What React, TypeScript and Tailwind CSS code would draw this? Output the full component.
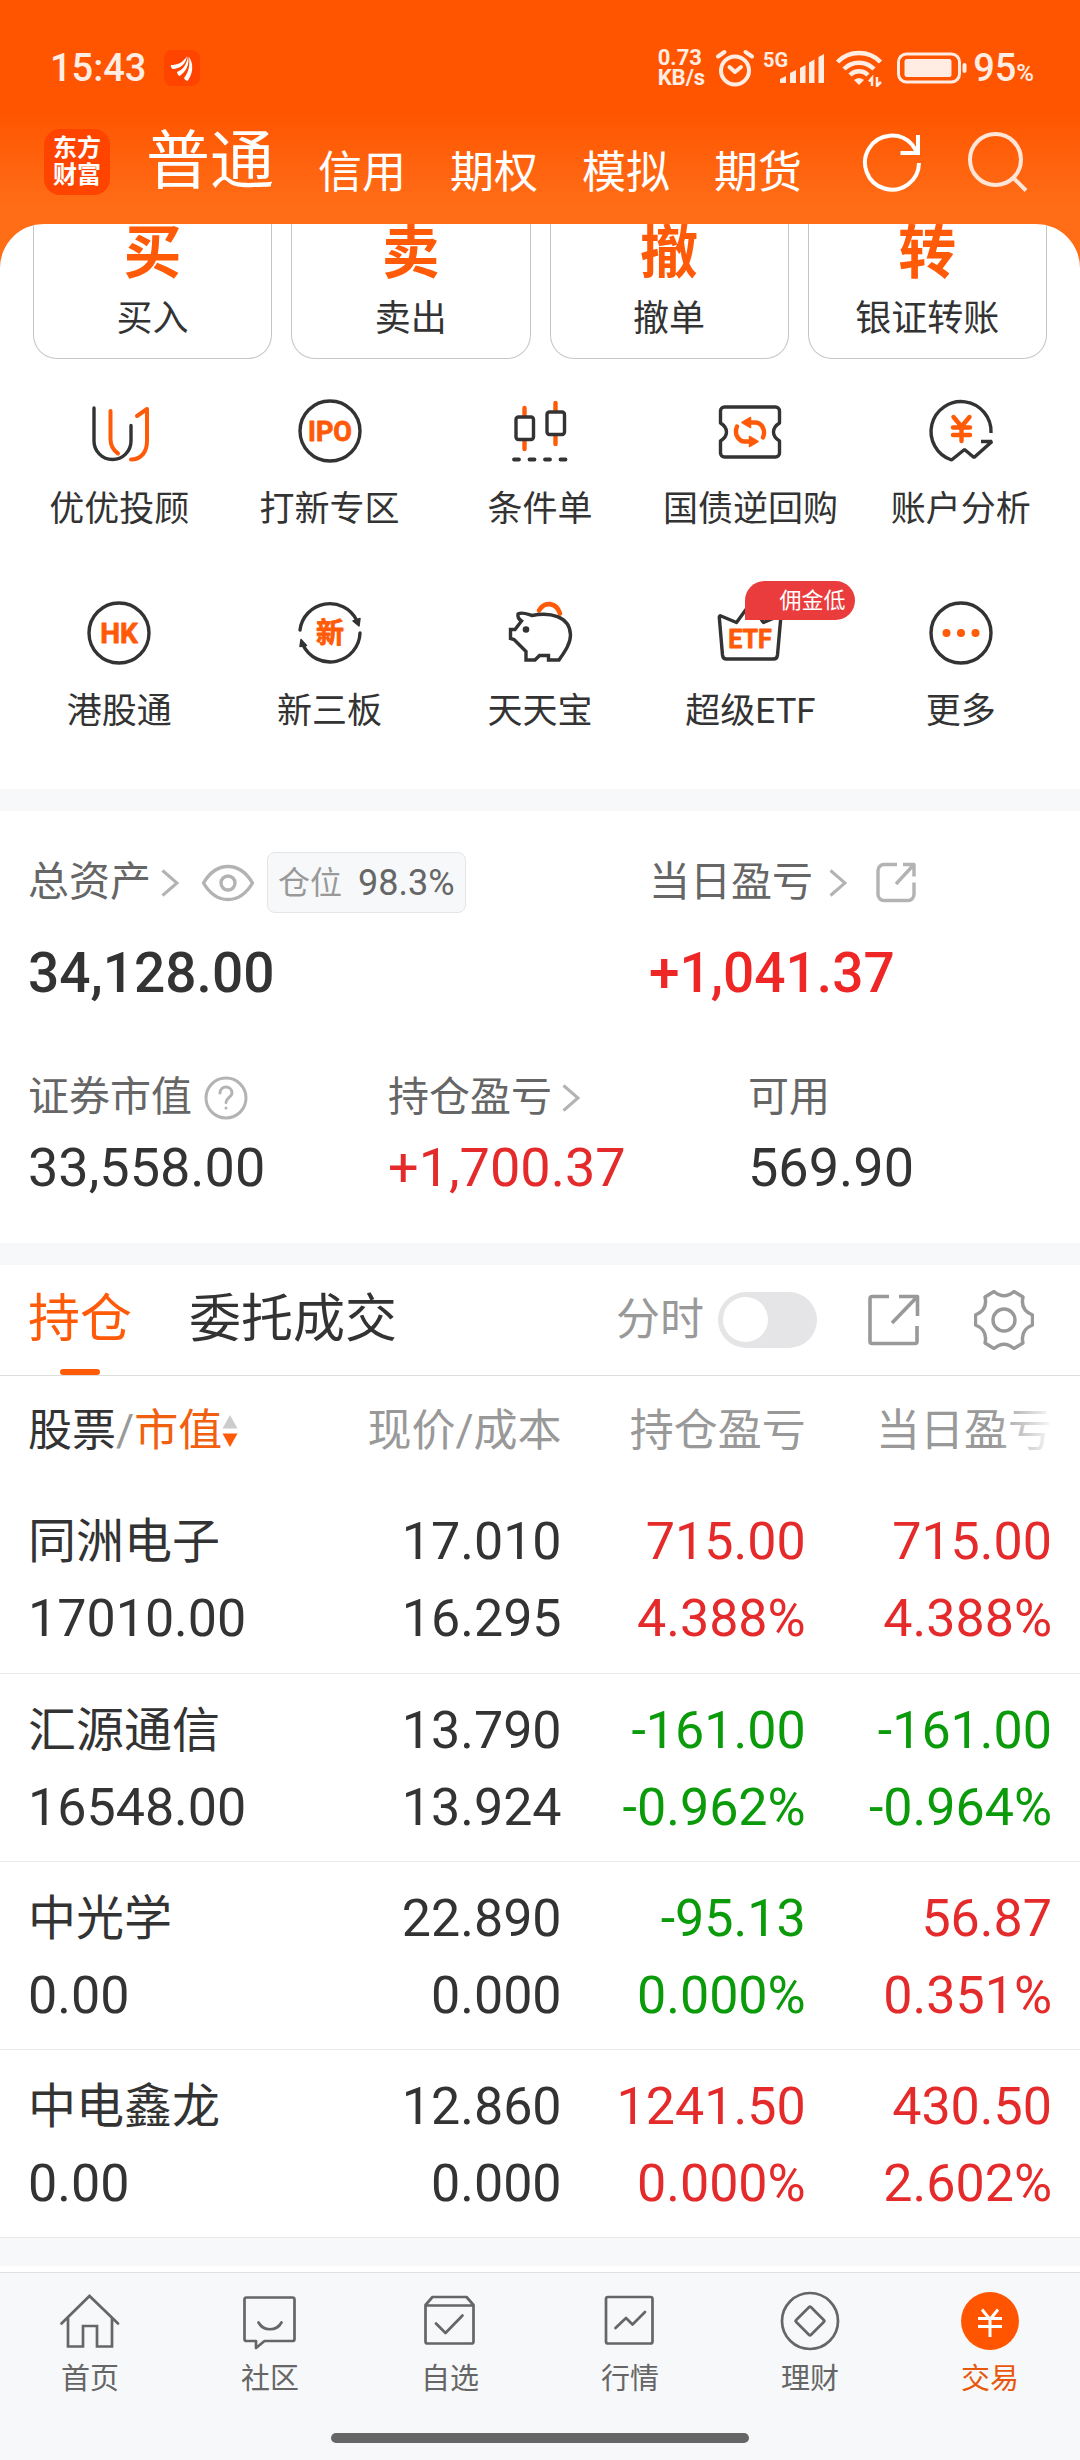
import React from "react";

const INK = "#333333";
const ORANGE = "#ff5a08";

type IconProps = { children: React.ReactNode };

function FeatureIcon({ children }: IconProps) {
  return (
    <svg
      viewBox="0 0 64 64"
      className="size-16 overflow-visible"
      fill="none"
      stroke={INK}
      strokeWidth={3.4}
      strokeLinecap="round"
      strokeLinejoin="round"
      aria-hidden="true"
    >
      {children}
    </svg>
  );
}

function IconLetters({ size, y, children }: { size: number; y: number; children: string }) {
  return (
    <text
      x={32}
      y={y}
      textAnchor="middle"
      fontSize={size}
      fontWeight={700}
      fill={ORANGE}
      stroke={ORANGE}
      strokeWidth={0.8}
      className="font-['Roboto','Noto_Sans_CJK_SC',sans-serif]"
    >
      {children}
    </text>
  );
}

const trades = [
  { glyph: "买", label: "买入" },
  { glyph: "卖", label: "卖出" },
  { glyph: "撤", label: "撤单" },
  { glyph: "转", label: "银证转账" },
];

const features: { label: string; badge?: string; icon: React.ReactNode }[] = [
  {
    label: "优优投顾",
    icon: (
      <FeatureIcon>
        <path d="M7 9v33a18.500 18.500 0 0 0 37 0V26.500" />
        <path d="M23.500 12v28c0 7 2.500 11 7.500 14.500" stroke={ORANGE} strokeWidth={4} />
        <path d="M50 17l10-7v32c0 11-6 18.500-16 18.500" stroke={ORANGE} strokeWidth={4} />
      </FeatureIcon>
    ),
  },
  {
    label: "打新专区",
    icon: (
      <FeatureIcon>
        <circle cx="32" cy="32" r="30" />
        <IconLetters size={27} y={42}>IPO</IconLetters>
      </FeatureIcon>
    ),
  },
  {
    label: "条件单",
    icon: (
      <FeatureIcon>
        <path d="M16.500 9v8M16.500 42v8M47.500 4v8M47.500 37v8" stroke={ORANGE} strokeWidth={4.4} />
        <rect x="8" y="18" width="17.500" height="22.500" rx="2.500" />
        <rect x="39" y="13" width="17.500" height="22.500" rx="2.500" />
        <path d="M6 60.500h5M21.500 60.500h5M37 60.500h5M52.500 60.500h5" strokeWidth={3.8} />
      </FeatureIcon>
    ),
  },
  {
    label: "国债逆回购",
    icon: (
      <FeatureIcon>
        <path d="M6.500 8h51a4 4 0 0 1 4 4v12c-8 5-8 13 0 18v12a4 4 0 0 1-4 4h-51a4 4 0 0 1-4-4V42c8-5 8-13 0-18V12a4 4 0 0 1 4-4z" />
        <path d="M31 23.500h6c7 0 11 8 8 15M33 42.500h-6c-7 0-11-8-8-15" stroke={ORANGE} strokeWidth={4.4} />
        <path d="M24 23.500l8.500-5v10zM40 42.500l-8.500-5v10z" fill={ORANGE} stroke={ORANGE} strokeWidth={1.5} />
      </FeatureIcon>
    ),
  },
  {
    label: "账户分析",
    icon: (
      <FeatureIcon>
        <path d="M62 34A30 30 0 1 0 22.500 61L35.500 50.500l9.500 8L63 42.500H52" strokeLinecap="butt" strokeLinejoin="bevel" />
        <path d="M24.500 18l8 9.500 8-9.500M24 28.500h17M24 36h17M32.500 28v14" stroke={ORANGE} strokeWidth={4.4} />
      </FeatureIcon>
    ),
  },
  {
    label: "港股通",
    icon: (
      <FeatureIcon>
        <circle cx="32" cy="32" r="30" />
        <IconLetters size={28} y={42}>HK</IconLetters>
      </FeatureIcon>
    ),
  },
  {
    label: "新三板",
    icon: (
      <FeatureIcon>
        <path d="M2 29A30 30 0 0 1 58.500 19M62 32A30 30 0 0 1 5 44" />
        <path d="M62 17.500L61 25l-6-5zM2 45.500L3 38.500l5.500 6z" fill={INK} strokeWidth={1.5} />
        <IconLetters size={28} y={42}>新</IconLetters>
      </FeatureIcon>
    ),
  },
  {
    label: "天天宝",
    icon: (
      <FeatureIcon>
        <path d="M31 9.500c5-9 17-9 21 3" stroke={ORANGE} strokeWidth={4.6} />
        <path
          d="M10 13c4-2.500 9 0 14 1.500 17-3.500 38 0 38.500 19.500 0 9-6 17-11.500 25H40.500v-4.500H31.500L27 59h-9v-8.500L10.500 43 6 38.500l-3.500-1V28.500H7l6.500-8.500c-3-2-4-4.500-3.500-7z"
          fill="#ffffff"
          strokeLinejoin="miter"
        />
        <circle cx="18" cy="28.500" r="3.300" fill={INK} stroke="none" />
      </FeatureIcon>
    ),
  },
  {
    label: "超级ETF",
    badge: "佣金低",
    icon: (
      <FeatureIcon>
        <path d="M3 15l15.500 6.500L32 3l13.500 18.500L61 15c1-.5 2 0 1.800 1.500L59.500 54c-.3 2.500-1.500 4-4 4h-47c-2.500 0-3.700-1.500-4-4L1.300 16.500C1.200 15 2 14.500 3 15z" />
        <IconLetters size={25} y={47}>ETF</IconLetters>
      </FeatureIcon>
    ),
  },
  {
    label: "更多",
    icon: (
      <FeatureIcon>
        <circle cx="32" cy="32" r="30" />
        <g fill={ORANGE} stroke="none">
          <circle cx="17.500" cy="32" r="4" />
          <circle cx="32" cy="32" r="4" />
          <circle cx="46.500" cy="32" r="4" />
        </g>
      </FeatureIcon>
    ),
  },
];

const RED = "text-[#e42a2a]";
const GREEN = "text-[#0a9a0a]";

const holdings = [
  { name: "同洲电子", value: "17010.00", price: "17.010", cost: "16.295", total: ["715.00", "4.388%", RED], day: ["715.00", "4.388%", RED] },
  { name: "汇源通信", value: "16548.00", price: "13.790", cost: "13.924", total: ["-161.00", "-0.962%", GREEN], day: ["-161.00", "-0.964%", GREEN] },
  { name: "中光学", value: "0.00", price: "22.890", cost: "0.000", total: ["-95.13", "0.000%", GREEN], day: ["56.87", "0.351%", RED] },
  { name: "中电鑫龙", value: "0.00", price: "12.860", cost: "0.000", total: ["1241.50", "0.000%", RED], day: ["430.50", "2.602%", RED] },
];

function TabIcon({ children }: IconProps) {
  return (
    <svg
      viewBox="0 0 60 60"
      className="size-15"
      fill="none"
      stroke="#666666"
      strokeWidth={2.7}
      strokeLinecap="round"
      strokeLinejoin="round"
      aria-hidden="true"
    >
      {children}
    </svg>
  );
}

const tabs = [
  {
    label: "首页",
    icon: (
      <TabIcon>
        <path d="M1.500 32.500L29.500 5 58 32.500M8 27v28.500h15V35h14v20.500h15V27" strokeLinejoin="miter" />
      </TabIcon>
    ),
  },
  {
    label: "社区",
    icon: (
      <TabIcon>
        <path d="M6.500 6.500h46a2 2 0 0 1 2 2v39.500a2 2 0 0 1-2 2h-28l-8.500 7v-7H6.500a2 2 0 0 1-2-2V8.500a2 2 0 0 1 2-2z" />
        <path d="M18.500 31.500c5 9 18 9 23 0" />
      </TabIcon>
    ),
  },
  {
    label: "自选",
    icon: (
      <TabIcon>
        <path d="M5.500 14L12.500 6h34l7 8v36.500a2 2 0 0 1-2 2H7.500a2 2 0 0 1-2-2zM5.500 14.500h48M16 32.500l9.500 9.500 17-17.500" />
      </TabIcon>
    ),
  },
  {
    label: "行情",
    icon: (
      <TabIcon>
        <rect x="6" y="6" width="46.500" height="46.500" rx="2" />
        <path d="M15.500 37L26 27l6.500 6.500L45 21" />
      </TabIcon>
    ),
  },
  {
    label: "理财",
    icon: (
      <TabIcon>
        <circle cx="30" cy="30" r="28" />
        <rect x="19.500" y="19.500" width="21" height="21" rx="1.500" transform="rotate(45 30 30)" />
      </TabIcon>
    ),
  },
  {
    label: "交易",
    active: true,
    icon: (
      <TabIcon>
        <circle cx="30" cy="30" r="29" fill="#ff5500" stroke="none" />
        <path d="M22 18.500L30 28.500 38 18.500M18 27.500h24M18 35.500h24M30 28v18" stroke="#ffffff" strokeWidth={3} strokeLinecap="butt" />
      </TabIcon>
    ),
  },
];

function Chevron() {
  return (
    <svg viewBox="0 0 18 28" className="h-7 w-[18px]" fill="none" stroke="#b3b3b3" strokeWidth={3} aria-hidden="true">
      <path d="M1.500 1.500L16 14 1.500 26.500" />
    </svg>
  );
}

function StatusBar() {
  return (
    <div className="flex h-10 items-center justify-between pr-[46px] pl-[50px] text-[#ffece2]">
      <div className="flex items-center gap-[18px]">
        <span className="text-[38px] leading-10 font-medium">15:43</span>
        <svg viewBox="0 0 36 36" className="size-9" aria-hidden="true">
          <rect width="36" height="36" rx="8" fill="#ff4400" />
          <path d="M7 15c6 0 12-2 16-9-1 8-7 13-14.500 13C7 18 6.500 16 7 15z" fill="#fff" />
          <path d="M13 22c6-2 10-8 11-16 2 8-2 16-8.500 20-1.500-1-2.500-2.500-2.500-4z" fill="#fff" />
          <path d="M20 28c5-6 6-13 5-21 5 7 4 17-1.500 24-1.500-.5-3-1.500-3.500-3z" fill="#fff" />
        </svg>
      </div>
      <div className="flex items-center">
        <span className="text-[22px] leading-5 font-bold">
          0.73
          <br />
          KB/s
        </span>
        <svg viewBox="0 0 40 38" className="ml-2.5 h-[38px] w-10" fill="none" stroke="currentColor" strokeWidth={4} strokeLinecap="round" strokeLinejoin="round" aria-hidden="true">
          <circle cx="20" cy="21.500" r="14" />
          <path d="M3 7.500L9.500 3M37 7.500L30.500 3M14.500 18l5.500 5 6-5" />
        </svg>
        <svg viewBox="0 0 62 38" className="ml-2 h-[38px] w-[62px]" fill="currentColor" aria-hidden="true">
          <text x="0" y="18" fontSize="20" fontWeight={700} className="font-['Roboto',sans-serif]">5G</text>
          <path d="M17 30l6-3v7h-6zM27 24l6-3v13h-6zM37 19l5.500-3v18H37zM46 13.500l5.500-3V34H46zM55.500 8l5.500-3v29h-5.500z" />
        </svg>
        <svg viewBox="0 0 48 38" className="ml-2.5 h-[38px] w-12" fill="none" stroke="currentColor" strokeWidth={4.5} aria-hidden="true">
          <path d="M2.500 13C14 1 34 1 45.500 13M9 20c8-8.500 22-8.500 30 0M15 26c5-5 13-5 18 0" />
          <path d="M19 31c3-2.500 7-2.500 10 0l-5 5z" fill="currentColor" stroke="none" />
          <path d="M37 37V29l-3 3.500M42 28v9l4-4" strokeWidth={2.5} />
        </svg>
        <svg viewBox="0 0 70 34" className="ml-3.5 h-[34px] w-[70px]" fill="currentColor" aria-hidden="true">
          <rect x="1.500" y="3" width="61" height="28" rx="8" fill="none" stroke="currentColor" strokeWidth={3} />
          <rect x="7.500" y="8" width="47" height="18" rx="2.500" />
          <rect x="65.500" y="12" width="4" height="10" rx="2" />
        </svg>
        <span className="ml-1.5 text-[38px] leading-10 font-medium">
          95<span className="text-2xl">%</span>
        </span>
      </div>
    </div>
  );
}

function Header() {
  return (
    <header className="bg-linear-to-b from-[#ff5500] from-50% to-[#ff6e17] to-95% pt-12 pb-[29px] text-white">
      <StatusBar />
      <div className="mt-[41px] flex h-[66px] items-center pr-[52px] pl-11">
        <a href="#home" className="flex size-[66px] items-center justify-center rounded-2xl bg-[#ff4400] text-center text-2xl leading-[27px] font-bold">
          东方
          <br />
          财富
        </a>
        <nav className="ml-9 flex items-end gap-11">
          <a href="#normal" className="text-[64px] leading-[66px]">普通</a>
          {["信用", "期权", "模拟", "期货"].map((item) => (
            <a key={item} href={`#${item}`} className="text-[44px] leading-[44px]">
              {item}
            </a>
          ))}
        </nav>
        <div className="ml-auto flex items-center gap-[46px]">
          <button type="button" aria-label="刷新">
            <svg viewBox="0 0 60 60" className="block size-15" fill="none" stroke="currentColor" strokeWidth={4} aria-hidden="true">
              <path d="M57 31A27 27 0 1 1 50 12.500L55 20" />
              <path d="M38.500 21H56V3" />
            </svg>
          </button>
          <button type="button" aria-label="搜索" className="text-[#ffe5d8]">
            <svg viewBox="0 0 60 60" className="block size-15" fill="none" stroke="currentColor" strokeWidth={4} aria-hidden="true">
              <circle cx="27.500" cy="27.500" r="25.500" />
              <path d="M45 45.500L58 58.500" />
            </svg>
          </button>
        </div>
      </div>
    </header>
  );
}

function Shortcuts() {
  return (
    <section className="overflow-hidden rounded-t-[44px] bg-white pb-[59px]">
      <div className="grid grid-cols-4 gap-[19px] px-[33px]">
        {trades.map((t) => (
          <button key={t.label} type="button" className="flex h-[135px] flex-col items-center rounded-b-3xl border border-t-0 border-[#c6c6c6]">
            <span className="text-[58px] leading-[58px] font-bold text-[#ff5a08]">{t.glyph}</span>
            <span className="mt-[19px] text-4xl leading-9 text-[#333333]">{t.label}</span>
          </button>
        ))}
      </div>
      <ul className="mt-10 grid grid-cols-5 gap-y-[73px] px-3.5">
        {features.map((f) => (
          <li key={f.label}>
            <a href={`#${f.label}`} className="relative flex flex-col items-center text-[#333333]">
              {f.icon}
              <span className="mt-[29px] text-[35px] leading-9 whitespace-nowrap">{f.label}</span>
              {f.badge && (
                <span className="absolute -top-5 left-1/2 flex h-[39px] w-[110px] -translate-x-[5px] items-center justify-end rounded-[20px] rounded-bl-none bg-[#ea3c3c] pr-2.5 text-[22px] text-white">
                  {f.badge}
                </span>
              )}
            </a>
          </li>
        ))}
      </ul>
    </section>
  );
}

function Assets() {
  return (
    <section className="bg-white pt-[41px] pb-12 text-[41px] text-[#666666]">
      <div className="grid grid-cols-[23fr_17fr]">
        <div className="pl-7">
          <div className="flex h-[61px] items-center">
            <a href="#assets" className="flex items-center gap-2.5">
              总资产
              <Chevron />
            </a>
            <button type="button" aria-label="隐藏金额" className="ml-[22px]">
              <svg viewBox="0 0 54 38" className="block h-[38px] w-[54px]" fill="none" stroke="#b3b3b3" strokeWidth={3.4} aria-hidden="true">
                <path d="M2.500 19C9 8 17 2.500 27 2.500S45 8 51.500 19C45 30 37 35.500 27 35.500S9 30 2.500 19z" strokeLinejoin="round" />
                <circle cx="27" cy="19" r="7" />
              </svg>
            </button>
            <span className="ml-3 flex h-[61px] items-center gap-4 rounded-lg border border-[#e4e5e8] bg-[#f7f8fa] px-2.5 text-[32px] text-[#999999]">
              仓位
              <span className="text-4xl text-[#666666]">98.3%</span>
            </span>
          </div>
          <p className="mt-[30px] text-[55px] leading-[60px] font-medium text-[#333333]">34,128.00</p>
        </div>
        <div className="pl-7">
          <div className="flex h-[61px] items-center">
            <a href="#today" className="flex items-center gap-4">
              当日盈亏
              <Chevron />
            </a>
            <button type="button" aria-label="分享盈亏" className="ml-7">
              <svg viewBox="0 0 42 42" className="block size-[42px]" fill="none" stroke="#b3b3b3" strokeWidth={3.4} strokeLinejoin="round" aria-hidden="true">
                <path d="M22 2.500H9a6 6 0 0 0-6 6v24a6 6 0 0 0 6 6h24a6 6 0 0 0 6-6V20.500M28 2.500h11v12M39 2.500L21 22" />
              </svg>
            </button>
          </div>
          <p className="mt-[30px] text-[55px] leading-[60px] font-medium text-[#ee2626]">+1,041.37</p>
        </div>
      </div>
      <div className="mt-[73px] grid grid-cols-3">
        <div className="pl-7">
          <div className="flex h-11 items-center gap-3">
            证券市值
            <button type="button" aria-label="证券市值说明">
              <svg viewBox="0 0 44 44" className="block size-11" fill="none" stroke="#b3b3b3" strokeWidth={3} strokeLinecap="round" aria-hidden="true">
                <circle cx="22" cy="22" r="20" />
                <path d="M16 17c0-8 12-8 12 0 0 4-6 5-6 9.500" />
                <circle cx="22" cy="32" r="1.500" fill="#b3b3b3" stroke="none" />
              </svg>
            </button>
          </div>
          <p className="mt-[21px] text-[54px] leading-[54px] text-[#333333]">33,558.00</p>
        </div>
        <div className="pl-7">
          <a href="#profit" className="flex h-11 items-center gap-2.5">
            持仓盈亏
            <Chevron />
          </a>
          <p className="mt-[21px] text-[54px] leading-[54px] text-[#e42a2a]">+1,700.37</p>
        </div>
        <div className="pl-7">
          <div className="flex h-11 items-center">可用</div>
          <p className="mt-[21px] text-[54px] leading-[54px] text-[#333333]">569.90</p>
        </div>
      </div>
    </section>
  );
}

function HoldingsToolbar() {
  return (
    <div className="flex h-[111px] items-stretch border-b border-[#dddddd] pr-[46px] pl-7">
      <button type="button" className="relative text-[52px] text-[#ff5a08]">
        持仓
        <span className="absolute bottom-0 left-1/2 h-1.5 w-10 -translate-x-1/2 rounded-full bg-[#ff5a08]" />
      </button>
      <button type="button" className="ml-[57px] text-[52px] text-[#333333]">
        委托成交
      </button>
      <div className="ml-auto flex items-center">
        <label htmlFor="minute" className="text-[44px] text-[#999999]">分时</label>
        <input
          id="minute"
          type="checkbox"
          role="switch"
          className="ml-3.5 h-14 w-[99px] appearance-none rounded-full bg-[#e5e5e7] p-[5px] before:block before:size-[45px] before:rounded-full before:bg-white before:content-['']"
        />
        <button type="button" aria-label="分享持仓" className="ml-[51px]">
          <svg viewBox="0 0 52 52" className="block size-[52px]" fill="none" stroke="#999999" strokeWidth={3.6} strokeLinejoin="round" aria-hidden="true">
            <path d="M21 2.500H4a2 2 0 0 0-2 2v43a2 2 0 0 0 2 2h43a2 2 0 0 0 2-2V32M31 2.500h18.500V22M49 3L24 29" />
          </svg>
        </button>
        <button type="button" aria-label="设置" className="ml-[54px]">
          <svg viewBox="0 0 60 60" className="block size-15" fill="none" stroke="#999999" strokeWidth={3.4} strokeLinejoin="round" aria-hidden="true">
            <path d="M20 1.500Q30 10 40 1.500L49 7Q46 20 58.500 25V35Q46 40 49 53L40 58.500Q30 50 20 58.500L11 53Q14 40 1.500 35V25Q14 20 11 7Z" />
            <circle cx="30" cy="30" r="11" />
          </svg>
        </button>
      </div>
    </div>
  );
}

function Pair({ top, bottom }: { top: string; bottom: string }) {
  return (
    <>
      <div className="leading-[77px]">{top}</div>
      <div className="leading-[77px]">{bottom}</div>
    </>
  );
}

function Holdings() {
  return (
    <section className="bg-white">
      <HoldingsToolbar />
      <table className="w-full table-fixed border-collapse text-right">
        <colgroup>
          <col className="w-[29.4%]" />
          <col className="w-[22.6%]" />
          <col className="w-[22.6%]" />
          <col className="w-[25.4%]" />
        </colgroup>
        <thead>
          <tr className="h-[109px] text-[44px] text-[#999999]">
            <th scope="col" className="p-0 pl-7 text-left font-normal">
              <button type="button" className="flex items-center whitespace-nowrap">
                <span className="text-[#333333]">股票</span>/<span className="text-[#f06010]">市值</span>
                <svg viewBox="0 0 16 34" className="h-[34px] w-4" aria-hidden="true">
                  <path d="M8 1l7.500 13.500H.5z" fill="#cccccc" />
                  <path d="M8 33L.5 19.500h15z" fill="#ff5a08" />
                </svg>
              </button>
            </th>
            <th scope="col" className="p-0 font-normal">现价/成本</th>
            <th scope="col" className="p-0 font-normal">持仓盈亏</th>
            <th scope="col" className="relative p-0 pr-7 font-normal">
              当日盈亏
              <span className="absolute inset-y-0 right-0 w-[84px] bg-linear-to-r from-white/0 to-white to-70%" />
            </th>
          </tr>
        </thead>
        <tbody>
          {holdings.map((h) => (
            <tr key={h.name} className="h-[188px] border-b border-[#ebebed] text-[52px] text-[#333333]">
              <th scope="row" className="p-0 pt-[3px] pl-7 text-left font-normal">
                <div className="text-5xl leading-[77px]">{h.name}</div>
                <div className="leading-[77px]">{h.value}</div>
              </th>
              <td className="p-0 pt-[3px]">
                <Pair top={h.price} bottom={h.cost} />
              </td>
              <td className={`p-0 pt-[3px] ${h.total[2]}`}>
                <Pair top={h.total[0]} bottom={h.total[1]} />
              </td>
              <td className={`p-0 pt-[3px] pr-7 ${h.day[2]}`}>
                <Pair top={h.day[0]} bottom={h.day[1]} />
              </td>
            </tr>
          ))}
        </tbody>
      </table>
    </section>
  );
}

function TabBar() {
  return (
    <footer className="mt-1.5 flex grow flex-col items-center border-t border-[#dfdfe1] bg-[#f7f8fa] pt-[18px]">
      <nav className="grid w-full grid-cols-6">
        {tabs.map((t) => (
          <a
            key={t.label}
            href={`#${t.label}`}
            aria-current={t.active ? "page" : undefined}
            className={`flex flex-col items-center gap-3 text-[29px] leading-8 ${t.active ? "text-[#e8580c]" : "text-[#666666]"}`}
          >
            {t.icon}
            {t.label}
          </a>
        ))}
      </nav>
      <div className="mt-[38px] mb-4 h-2.5 w-[418px] rounded-full bg-[#666666]" />
    </footer>
  );
}

export default function App() {
  return (
    <div lang="zh-CN" className="flex min-h-screen flex-col bg-white font-['Roboto','Noto_Sans_CJK_SC',sans-serif]">
      <div className="bg-[#ff6e17]">
        <Header />
        <Shortcuts />
      </div>
      <div className="h-[22px] bg-[#f7f8fa]" />
      <Assets />
      <div className="h-[22px] bg-[#f7f8fa]" />
      <Holdings />
      <div className="h-7 bg-[#f7f8fa]" />
      <TabBar />
    </div>
  );
}
